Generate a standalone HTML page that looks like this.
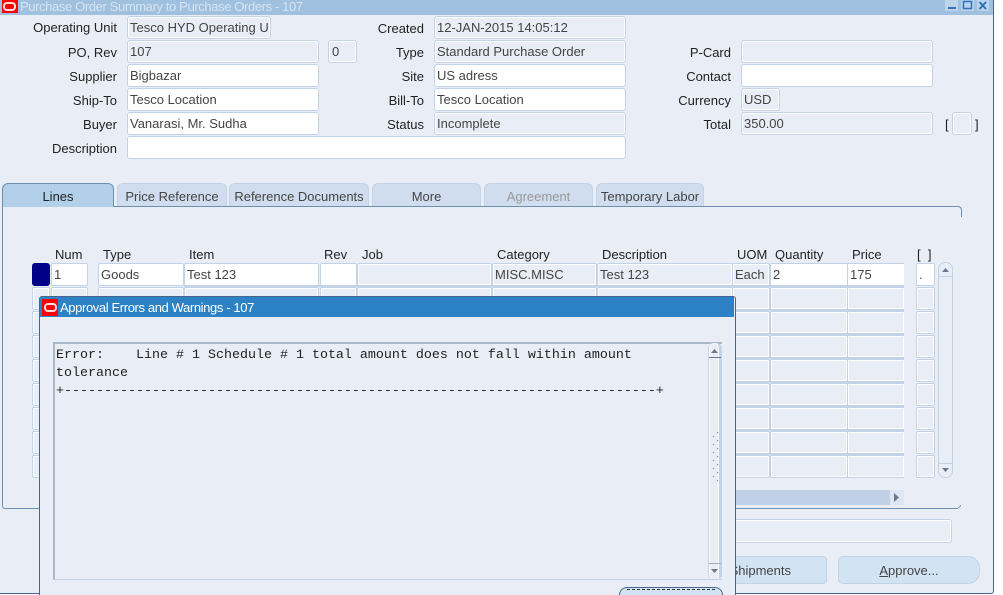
<!DOCTYPE html>
<html><head><meta charset="utf-8"><style>
html,body{margin:0;padding:0;background:#fff;width:1003px;height:595px;overflow:hidden}
#p{position:relative;width:1003px;height:595px;overflow:hidden;background:#fff;font:13px "Liberation Sans",sans-serif}
#p div,#p span.a{position:absolute;box-sizing:border-box}
.l{white-space:nowrap;color:#222;line-height:14px;text-align:right;width:140px}
.h{white-space:nowrap;color:#222;line-height:14px}
.f{height:23px;border:1px solid #c2d3e8;border-radius:3px;background:#e9eef6;box-shadow:inset 0 0 0 1px #fff;color:#444;line-height:21px;padding-left:2px;white-space:nowrap;overflow:hidden}
.tab{top:183px;height:23px;background:#d0ddee;border:1px solid #c2d3e8;border-bottom:none;border-radius:6px 6px 0 0;text-align:center;color:#444;line-height:26px;white-space:nowrap}
.c{height:23px;border:1px solid #c2d3e8;border-radius:2px;background:#e9eef6;box-shadow:inset 0 0 0 1px #fff;color:#444;line-height:21px;padding-left:2px;white-space:nowrap;overflow:hidden}
.w{background:#fff}
.bar{height:2px;background:#c2d3e8}
.mono{font:13.33px/18px "Liberation Mono",monospace;color:#222;white-space:pre}
.btn{top:556px;height:28px;background:#d2e3f3;border:1px solid #c2d3e8;color:#444;text-align:center;line-height:27px;white-space:nowrap;overflow:hidden}
</style></head><body><div id="p">
<div style="left:0;top:0;width:994px;height:594px;background:#e9eef6;border-right:1px solid #4a6490;border-bottom:1px solid #4a6490;border-bottom-right-radius:3px"></div>
<div style="left:0;top:0;width:993px;height:15px;background:#a0c0df"></div>
<div style="left:2px;top:0;width:16px;height:13px;background:#f00"></div>
<div style="left:3px;top:2px;width:13px;height:9px;border:2px solid #ffe0e0;border-radius:4px"></div>
<div class="h" style="left:20px;top:0;color:#d6e4f2;line-height:13px;letter-spacing:-.38px">Purchase Order Summary to Purchase Orders - 107</div>
<svg style="position:absolute;left:944px;top:0" width="48" height="12"><rect x="1" y="0" width="13" height="11" fill="#bcd3ea"/><rect x="4" y="7" width="8" height="2" fill="#2c72b8"/><rect x="17" y="0" width="13" height="11" fill="#bcd3ea"/><rect x="19.5" y="1.5" width="8" height="7" fill="none" stroke="#2c72b8" stroke-width="1.5"/><rect x="33" y="0" width="12" height="11" fill="#bcd3ea"/><path d="M35.5 2L42 9M42 2L35.5 9" stroke="#2c72b8" stroke-width="2"/></svg>

<div class="l" style="left:-23px;top:21px">Operating Unit</div>
<div class="l" style="left:-23px;top:46px">PO, Rev</div>
<div class="l" style="left:-23px;top:70px">Supplier</div>
<div class="l" style="left:-23px;top:94px">Ship-To</div>
<div class="l" style="left:-23px;top:118px">Buyer</div>
<div class="l" style="left:-23px;top:142px">Description</div>
<div class="f" style="left:127px;top:16px;width:144px">Tesco HYD Operating U</div>
<div class="f" style="left:127px;top:40px;width:192px">107</div>
<div class="f" style="left:328px;top:40px;width:29px;padding-left:3px">0</div>
<div class="f w" style="left:127px;top:64px;width:192px">Bigbazar</div>
<div class="f w" style="left:127px;top:88px;width:192px">Tesco Location</div>
<div class="f w" style="left:127px;top:112px;width:192px">Vanarasi, Mr. Sudha</div>
<div class="f w" style="left:127px;top:136px;width:499px;background:#fff"></div>

<div class="l" style="left:284px;top:22px">Created</div>
<div class="l" style="left:284px;top:46px">Type</div>
<div class="l" style="left:284px;top:70px">Site</div>
<div class="l" style="left:284px;top:94px">Bill-To</div>
<div class="l" style="left:284px;top:118px">Status</div>
<div class="f" style="left:434px;top:16px;width:192px">12-JAN-2015 14:05:12</div>
<div class="f" style="left:434px;top:40px;width:192px">Standard Purchase Order</div>
<div class="f w" style="left:434px;top:64px;width:192px">US adress</div>
<div class="f w" style="left:434px;top:88px;width:192px">Tesco Location</div>
<div class="f" style="left:434px;top:112px;width:192px">Incomplete</div>

<div class="l" style="left:591px;top:46px">P-Card</div>
<div class="l" style="left:591px;top:70px">Contact</div>
<div class="l" style="left:591px;top:94px">Currency</div>
<div class="l" style="left:591px;top:118px">Total</div>
<div class="f" style="left:741px;top:40px;width:192px"></div>
<div class="f w" style="left:741px;top:64px;width:192px"></div>
<div class="f" style="left:741px;top:88px;width:39px">USD</div>
<div class="f" style="left:741px;top:112px;width:192px">350.00</div>
<div class="h" style="left:945px;top:118px">[</div>
<div class="f" style="left:952px;top:112px;width:20px"></div>
<div class="h" style="left:975px;top:118px">]</div>

<!-- tab panel outline: left, top, bottom and short right ticks only -->
<div style="left:2px;top:206px;width:1px;height:297px;background:#6f8fb0"></div>
<div style="left:2px;top:206px;width:956px;height:1px;background:#6f8fb0"></div>
<div style="left:5px;top:508px;width:953px;height:1px;background:#6f8fb0"></div>
<div style="left:956px;top:206px;width:6px;height:11px;border-top:1px solid #6f8fb0;border-right:1px solid #6f8fb0;border-top-right-radius:4px"></div>
<div style="left:958px;top:505px;width:3px;height:3px;border-bottom:1px solid #6f8fb0;border-right:1px solid #6f8fb0;border-bottom-right-radius:3px"></div>
<div style="left:2px;top:503px;width:4px;height:6px;border-left:1px solid #6f8fb0;border-bottom:1px solid #6f8fb0;border-bottom-left-radius:3px"></div>

<div class="tab" style="left:2px;width:112px;background:#b3d0ea;border-color:#6f8fb0;color:#222;height:24px">Lines</div>
<div class="tab" style="left:117px;width:110px">Price Reference</div>
<div class="tab" style="left:229px;width:140px">Reference Documents</div>
<div class="tab" style="left:372px;width:109px">More</div>
<div class="tab" style="left:484px;width:109px;color:#999">Agreement</div>
<div class="tab" style="left:596px;width:108px">Temporary Labor</div>

<div class="h" style="left:55px;top:248px">Num</div>
<div class="h" style="left:103px;top:248px">Type</div>
<div class="h" style="left:189px;top:248px">Item</div>
<div class="h" style="left:324px;top:248px">Rev</div>
<div class="h" style="left:362px;top:248px">Job</div>
<div class="h" style="left:497px;top:248px">Category</div>
<div class="h" style="left:602px;top:248px">Description</div>
<div class="h" style="left:737px;top:248px">UOM</div>
<div class="h" style="left:775px;top:248px">Quantity</div>
<div class="h" style="left:852px;top:248px">Price</div>
<div class="h" style="left:917px;top:248px">[ &nbsp;]</div>

<div class="bar" style="left:184px;top:285px;width:720px"></div>
<div style="left:32px;top:263px;width:18px;height:23px;background:#000088;border-radius:3px"></div>
<div class="c w" style="left:51px;top:263px;width:37px">1</div>
<div class="c w" style="left:98px;top:263px;width:86px">Goods</div>
<div class="c w" style="left:184px;top:263px;width:135px">Test 123</div>
<div class="c w" style="left:320px;top:263px;width:37px"></div>
<div class="c" style="left:357px;top:263px;width:135px"></div>
<div class="c" style="left:492px;top:263px;width:105px">MISC.MISC</div>
<div class="c" style="left:597px;top:263px;width:136px">Test 123</div>
<div class="c" style="left:732px;top:263px;width:38px">Each</div>
<div class="c w" style="left:770px;top:263px;width:78px">2</div>
<div class="c w" style="left:847px;top:263px;width:57px;border-right:none;border-radius:0">175</div>
<div class="c w" style="left:916px;top:263px;width:19px">.</div>

<div class="c" style="left:51px;top:287px;width:37px"></div>
<div class="c" style="left:98px;top:287px;width:86px"></div>
<div class="c" style="left:184px;top:287px;width:135px"></div>
<div class="c" style="left:320px;top:287px;width:37px"></div>
<div class="c" style="left:357px;top:287px;width:135px"></div>
<div class="c" style="left:492px;top:287px;width:105px"></div>
<div class="c" style="left:597px;top:287px;width:136px"></div>

<!-- selector column -->
<div class="c" style="left:32px;top:287px;width:18px;padding:0"></div>
<div class="c" style="left:32px;top:311px;width:18px;padding:0"></div>
<div class="c" style="left:32px;top:335px;width:18px;padding:0"></div>
<div class="c" style="left:32px;top:359px;width:18px;padding:0"></div>
<div class="c" style="left:32px;top:383px;width:18px;padding:0"></div>
<div class="c" style="left:32px;top:407px;width:18px;padding:0"></div>
<div class="c" style="left:32px;top:431px;width:18px;padding:0"></div>
<div class="c" style="left:32px;top:455px;width:18px;padding:0"></div>

<!-- right columns -->
<div class="bar" style="left:732px;top:309px;width:172px"></div>
<div class="bar" style="left:732px;top:333px;width:172px"></div>
<div class="bar" style="left:732px;top:357px;width:172px"></div>
<div class="bar" style="left:732px;top:381px;width:172px"></div>
<div class="bar" style="left:732px;top:405px;width:172px"></div>
<div class="bar" style="left:732px;top:429px;width:172px"></div>
<div class="bar" style="left:732px;top:453px;width:172px"></div>

<div class="c" style="left:732px;top:287px;width:38px"></div><div class="c" style="left:770px;top:287px;width:78px"></div><div class="c" style="left:847px;top:287px;width:57px;border-right:none;border-radius:0"></div><div class="c" style="left:916px;top:287px;width:19px"></div>
<div class="c" style="left:732px;top:311px;width:38px"></div><div class="c" style="left:770px;top:311px;width:78px"></div><div class="c" style="left:847px;top:311px;width:57px;border-right:none;border-radius:0"></div><div class="c" style="left:916px;top:311px;width:19px"></div>
<div class="c" style="left:732px;top:335px;width:38px"></div><div class="c" style="left:770px;top:335px;width:78px"></div><div class="c" style="left:847px;top:335px;width:57px;border-right:none;border-radius:0"></div><div class="c" style="left:916px;top:335px;width:19px"></div>
<div class="c" style="left:732px;top:359px;width:38px"></div><div class="c" style="left:770px;top:359px;width:78px"></div><div class="c" style="left:847px;top:359px;width:57px;border-right:none;border-radius:0"></div><div class="c" style="left:916px;top:359px;width:19px"></div>
<div class="c" style="left:732px;top:383px;width:38px"></div><div class="c" style="left:770px;top:383px;width:78px"></div><div class="c" style="left:847px;top:383px;width:57px;border-right:none;border-radius:0"></div><div class="c" style="left:916px;top:383px;width:19px"></div>
<div class="c" style="left:732px;top:407px;width:38px"></div><div class="c" style="left:770px;top:407px;width:78px"></div><div class="c" style="left:847px;top:407px;width:57px;border-right:none;border-radius:0"></div><div class="c" style="left:916px;top:407px;width:19px"></div>
<div class="c" style="left:732px;top:431px;width:38px"></div><div class="c" style="left:770px;top:431px;width:78px"></div><div class="c" style="left:847px;top:431px;width:57px;border-right:none;border-radius:0"></div><div class="c" style="left:916px;top:431px;width:19px"></div>
<div class="c" style="left:732px;top:455px;width:38px"></div><div class="c" style="left:770px;top:455px;width:78px"></div><div class="c" style="left:847px;top:455px;width:57px;border-right:none;border-radius:0"></div><div class="c" style="left:916px;top:455px;width:19px"></div>

<!-- table vertical scrollbar -->
<div style="left:938px;top:262px;width:15px;height:216px;border:1px solid #c2d3e8;border-radius:7px;background:#e9eef6"></div>
<div style="left:939px;top:276px;width:13px;height:1px;background:#c2d3e8"></div>
<div style="left:939px;top:463px;width:13px;height:1px;background:#c2d3e8"></div>
<svg style="position:absolute;left:941px;top:267px" width="10" height="6"><path d="M1 5L4.5 1L8 5Z" fill="#6d7890"/></svg>
<svg style="position:absolute;left:941px;top:467px" width="10" height="6"><path d="M1 1L8 1L4.5 5Z" fill="#6d7890"/></svg>

<!-- horizontal scrollbar -->
<div style="left:700px;top:490px;width:204px;height:15px;background:#c0d0e6"></div>
<div style="left:890px;top:490px;width:14px;height:15px;background:#dde6f2"></div>
<svg style="position:absolute;left:893px;top:492px" width="9" height="11"><path d="M1 1L6 5.5L1 10Z" fill="#6d7890"/></svg>

<!-- status field -->
<div class="f" style="left:700px;top:519px;width:252px;height:24px"></div>

<!-- buttons -->
<div class="btn" style="left:600px;width:227px;border-radius:4px;text-align:right;padding-right:35px">Shipments</div>
<div class="btn" style="left:838px;width:142px;border-radius:5px 12px 12px 5px"><u>A</u>pprove...</div>

<!-- dialog -->
<div style="left:39px;top:296px;width:697px;height:299px;background:#e9eef6;border:1px solid #4a6490;border-bottom:none;border-radius:3px 3px 0 0"></div>
<div style="left:40px;top:297px;width:694px;height:20px;background:#2c82c4"></div>
<div style="left:42px;top:299px;width:16px;height:17px;background:#f00"></div>
<div style="left:44px;top:303px;width:13px;height:9px;border:2px solid #ffe0e0;border-radius:4px"></div>
<div class="h" style="left:60px;top:301px;color:#fff;letter-spacing:-.38px">Approval Errors and Warnings - 107</div>

<div style="left:53px;top:342px;width:669px;height:238px;border-top:2px solid #a9b8c9;border-left:2px solid #a9b8c9;border-bottom:1px solid #c2d3e8"></div>
<div class="mono" style="left:56px;top:347px">Error:    Line # 1 Schedule # 1 total amount does not fall within amount
tolerance
+--------------------------------------------------------------------------+</div>

<!-- dialog scrollbar -->
<div style="left:708px;top:343px;width:14px;height:236px;background:#e9eef6;border-left:1px solid #c2d3e8;border-right:3px solid #c2d3e8;box-shadow:inset 1px 0 0 #fff,inset -1px 0 0 #fff;border-radius:6px 6px 4px 4px"></div>
<div style="left:709px;top:357px;width:12px;height:1px;background:#6d7890"></div>
<div style="left:709px;top:563px;width:12px;height:1px;background:#9fb0c6"></div>
<svg style="position:absolute;left:710px;top:348px" width="10" height="6"><path d="M1 5L4.5 1L8 5Z" fill="#6d7890"/></svg>
<svg style="position:absolute;left:710px;top:568px" width="10" height="6"><path d="M1 1L8 1L4.5 5Z" fill="#6d7890"/></svg>
<svg style="position:absolute;left:710px;top:431px" width="10" height="52"><g stroke="#7f8ea6" stroke-width="1" fill="none"><path d="M7 2l1-1M3 6l1-1M7 10l1-1M3 14l1-1M7 18l1-1M3 22l1-1M7 26l1-1M3 30l1-1M7 34l1-1M3 38l1-1M7 42l1-1M3 46l1-1M7 50l1-1"/></g></svg>

<!-- OK button -->
<div style="left:619px;top:587px;width:104px;height:12px;background:#d2e3f3;border:1px solid #4a6490;border-radius:8px 8px 0 0"></div>
<div style="left:627px;top:589px;width:88px;height:1px;border-top:1px dashed #333"></div>
</div></body></html>
